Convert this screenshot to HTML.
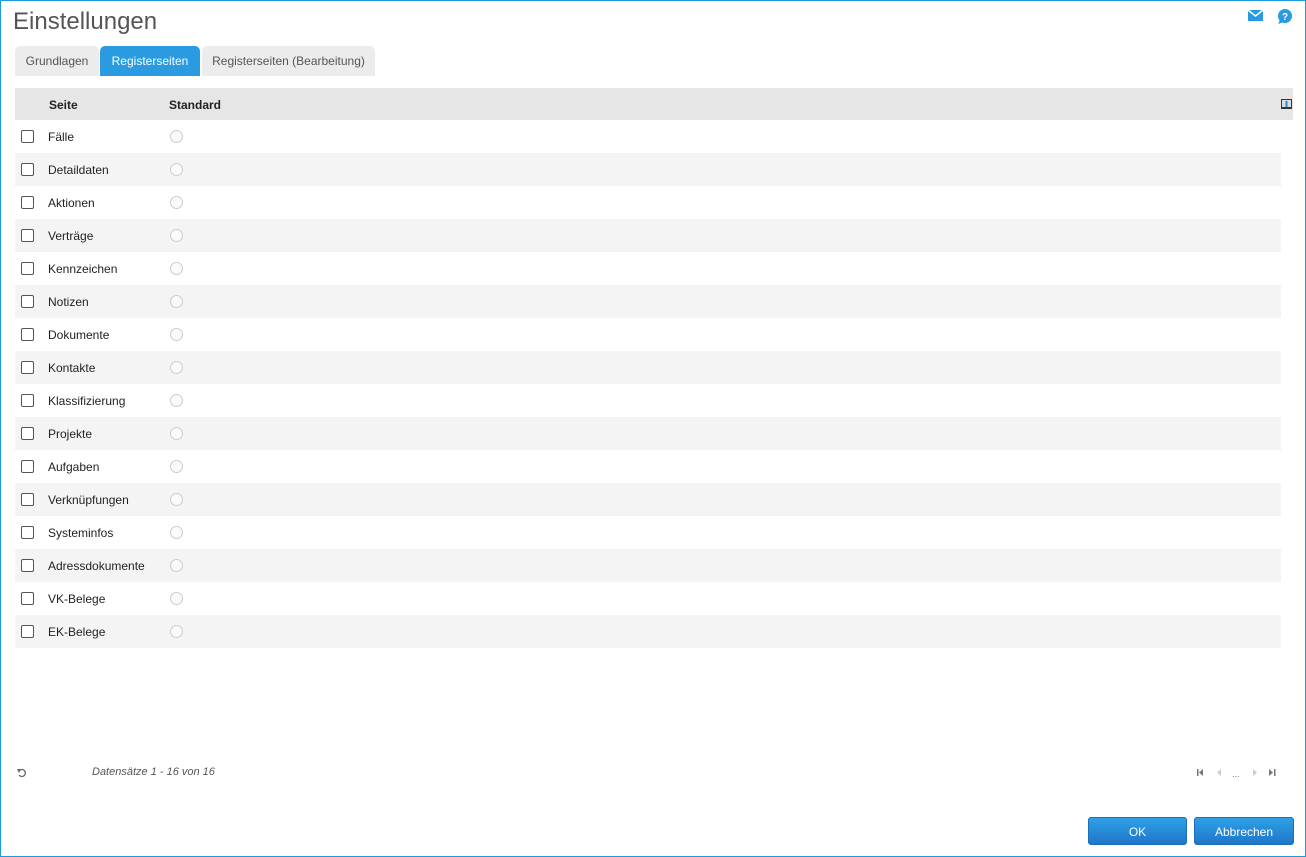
<!DOCTYPE html>
<html><head><meta charset="utf-8"><style>
*{box-sizing:border-box;margin:0;padding:0}
body{width:1306px;height:857px;position:relative;background:#fff;font-family:"Liberation Sans",Arial,sans-serif;overflow:hidden}
.frame{position:absolute;left:0;top:0;width:1306px;height:857px;border:1px solid #1a9be0}
h1{position:absolute;left:13px;top:8px;font-size:24px;font-weight:normal;color:#555}
.tab{position:absolute;top:46px;height:30px;line-height:30px;font-size:12px;color:#555;background:#ececec;border-radius:5px 5px 0 0;text-align:center}
.tab.act{background:#2a9be0;color:#fff}
.hdr{position:absolute;left:15px;top:88px;width:1278px;height:32px;background:#e6e6e6;font-size:12px;font-weight:bold;color:#222}
.row{position:absolute;left:15px;width:1266px;height:33px;font-size:12px;color:#222}
.row.s{background:#f4f4f4}
.cb{position:absolute;left:6px;top:10px;width:13px;height:13px;border:1px solid #555;border-radius:2px;background:#fff}
.lb{position:absolute;left:33px;top:10px}
.rd{position:absolute;left:155px;top:10px;width:13px;height:13px;border:1px solid #ccc;border-radius:50%;background:#fafafa}
.btn{position:absolute;top:817px;height:28px;border-radius:3px;background:linear-gradient(#2ea0e6,#1f76c9);color:#fff;font-size:12px;text-align:center;line-height:28px;border:1px solid #1d6eb8}
</style></head><body>
<div class="frame"></div>
<h1>Einstellungen</h1>
<svg style="position:absolute;left:1248px;top:10px" width="15" height="11"><rect width="15" height="11" fill="#2a9be0"/><path d="M0 0 L7.5 6 L15 0" stroke="#fff" stroke-width="1.5" fill="none"/></svg>
<svg style="position:absolute;left:1277px;top:9px" width="16" height="15"><circle cx="8" cy="7" r="7" fill="#2a9be0"/><path d="M3 11 L1 15 L7 13z" fill="#2a9be0"/><text x="8" y="11" font-size="10" font-weight="bold" fill="#fff" text-anchor="middle" font-family="Liberation Sans">?</text></svg>
<div class="tab" style="left:15px;width:84px">Grundlagen</div>
<div class="tab act" style="left:100px;width:100px">Registerseiten</div>
<div class="tab" style="left:202px;width:173px">Registerseiten (Bearbeitung)</div>
<div class="hdr"><span style="position:absolute;left:34px;top:10px">Seite</span><span style="position:absolute;left:154px;top:10px">Standard</span>
<svg style="position:absolute;left:1266px;top:11px" width="11" height="10"><rect x="0.5" y="0.5" width="10" height="9" fill="#ddd" stroke="#333"/><rect x="4.5" y="2" width="2" height="6" fill="#1a8fe0"/><rect x="0" y="8" width="11" height="2" fill="#333"/></svg></div>
<div class="row" style="top:120px"><div class="cb"></div><div class="lb">Fälle</div><div class="rd"></div></div>
<div class="row s" style="top:153px"><div class="cb"></div><div class="lb">Detaildaten</div><div class="rd"></div></div>
<div class="row" style="top:186px"><div class="cb"></div><div class="lb">Aktionen</div><div class="rd"></div></div>
<div class="row s" style="top:219px"><div class="cb"></div><div class="lb">Verträge</div><div class="rd"></div></div>
<div class="row" style="top:252px"><div class="cb"></div><div class="lb">Kennzeichen</div><div class="rd"></div></div>
<div class="row s" style="top:285px"><div class="cb"></div><div class="lb">Notizen</div><div class="rd"></div></div>
<div class="row" style="top:318px"><div class="cb"></div><div class="lb">Dokumente</div><div class="rd"></div></div>
<div class="row s" style="top:351px"><div class="cb"></div><div class="lb">Kontakte</div><div class="rd"></div></div>
<div class="row" style="top:384px"><div class="cb"></div><div class="lb">Klassifizierung</div><div class="rd"></div></div>
<div class="row s" style="top:417px"><div class="cb"></div><div class="lb">Projekte</div><div class="rd"></div></div>
<div class="row" style="top:450px"><div class="cb"></div><div class="lb">Aufgaben</div><div class="rd"></div></div>
<div class="row s" style="top:483px"><div class="cb"></div><div class="lb">Verknüpfungen</div><div class="rd"></div></div>
<div class="row" style="top:516px"><div class="cb"></div><div class="lb">Systeminfos</div><div class="rd"></div></div>
<div class="row s" style="top:549px"><div class="cb"></div><div class="lb">Adressdokumente</div><div class="rd"></div></div>
<div class="row" style="top:582px"><div class="cb"></div><div class="lb">VK-Belege</div><div class="rd"></div></div>
<div class="row s" style="top:615px"><div class="cb"></div><div class="lb">EK-Belege</div><div class="rd"></div></div>
<svg style="position:absolute;left:17px;top:768px" width="10" height="10"><path d="M2 3 A3.5 3.5 0 1 1 2 7" stroke="#666" stroke-width="1.3" fill="none"/><path d="M0 1 L4 1 L2 5z" fill="#666"/></svg>
<div style="position:absolute;left:92px;top:766px;font-size:11px;font-style:italic;color:#555">Datensätze 1 - 16 von 16</div>
<svg style="position:absolute;left:1196px;top:768px" width="84" height="10"><rect x="1" y="1" width="1.5" height="7" fill="#777"/><path d="M7 1 L3 4.5 L7 8z" fill="#777"/><path d="M25 1 L21 4.5 L25 8z" fill="#ccc"/><text x="36" y="9" font-size="9" fill="#777" font-family="Liberation Sans">...</text><path d="M57 1 L61 4.5 L57 8z" fill="#ccc"/><path d="M73 1 L77 4.5 L73 8z" fill="#777"/><rect x="78" y="1" width="1.5" height="7" fill="#777"/></svg>
<div class="btn" style="left:1088px;width:99px">OK</div>
<div class="btn" style="left:1194px;width:100px">Abbrechen</div>
</body></html>
